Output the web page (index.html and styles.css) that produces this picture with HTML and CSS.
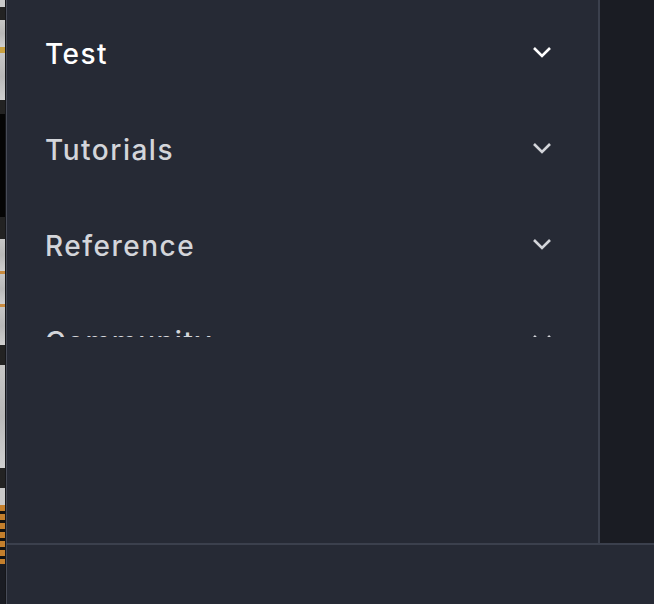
FILE: index.html
```html
<!DOCTYPE html>
<html>
<head>
<meta charset="utf-8">
<link rel="stylesheet" href="styles.css">
</head>
<body>
<div class="app">
  <div class="thumbs">
    <div class="t light" style="height:7px"></div>
    <div class="t dark" style="height:13px"></div>
    <div class="t light text" style="height:27px"></div>
    <div class="t light dot" style="height:6px"></div>
    <div class="t light text" style="height:47px"></div>
    <div class="t dark" style="height:14px"></div>
    <div class="t black" style="height:103px"></div>
    <div class="t dark" style="height:22px"></div>
    <div class="t light text" style="height:32px"></div>
    <div class="t light orange" style="height:3px"></div>
    <div class="t light text" style="height:30px"></div>
    <div class="t light orange" style="height:3px"></div>
    <div class="t light text" style="height:38px"></div>
    <div class="t dark" style="height:20px"></div>
    <div class="t light text" style="height:103px"></div>
    <div class="t dark" style="height:20px"></div>
    <div class="t light" style="height:17px"></div>
    <div class="t orange-fill" style="height:59px"></div>
  </div>
  <div class="main">
    <div class="top">
      <nav class="sidebar">
        <div class="list">
          <div class="row active"><span class="label">Test</span>
            <svg class="chev" width="20" height="12" viewBox="0 0 20 12"><path d="M2 2L10 10L18 2" fill="none" stroke="currentColor" stroke-width="2.6"/></svg>
          </div>
          <div class="row"><span class="label">Tutorials</span>
            <svg class="chev" width="20" height="12" viewBox="0 0 20 12"><path d="M2 2L10 10L18 2" fill="none" stroke="currentColor" stroke-width="2.6"/></svg>
          </div>
          <div class="row"><span class="label">Reference</span>
            <svg class="chev" width="20" height="12" viewBox="0 0 20 12"><path d="M2 2L10 10L18 2" fill="none" stroke="currentColor" stroke-width="2.6"/></svg>
          </div>
          <div class="row"><span class="label">Community</span>
            <svg class="chev" width="20" height="12" viewBox="0 0 20 12"><path d="M2 2L10 10L18 2" fill="none" stroke="currentColor" stroke-width="2.6"/></svg>
          </div>
        </div>
      </nav>
      <div class="rest"></div>
    </div>
    <div class="bottom"></div>
  </div>
</div>
</body>
</html>
```

FILE: styles.css
```css
html, body {
  margin: 0;
  padding: 0;
  width: 654px;
  height: 604px;
  overflow: hidden;
  background: #1a1c23;
  font-family: Inter, "Noto Sans", sans-serif;
}
.app {
  display: flex;
  height: 604px;
}
.thumbs {
  width: 5px;
  display: flex;
  flex-direction: column;
  border-right: 1px solid #15161a;
}
.t { flex: none; }
.light { background: #c9c9c9; }
.text { background: linear-gradient(180deg, #c6c6c6, #b9b9b9 50%, #cfcfcf); }
.dot { background: #c8a040; }
.dark { background: #232323; }
.black { background: #050505; }
.orange { background: #c98b3f; }
.orange-fill {
  background: repeating-linear-gradient(180deg, #c47f2c 0 6px, #141210 6px 9px);
}
.main {
  flex: 1;
  display: flex;
  flex-direction: column;
  border-left: 1px solid #474b57;
}
.top {
  display: flex;
  height: 543px;
}
.sidebar {
  flex: 1;
  background: #262a35;
  border-right: 2px solid #3b404d;
}
.list {
  height: 337px;
  overflow: hidden;
  padding: 5px 46px 0 38px;
  box-sizing: border-box;
}
.row {
  height: 96px;
  display: flex;
  align-items: center;
  justify-content: space-between;
  color: #d3d5da;
}
.row.active { color: #ffffff; }
.label {
  font-size: 28px;
  font-weight: 500;
  letter-spacing: 1.5px;
  line-height: 32px;
  margin-top: 2px;
}
.chev { display: block; margin-top: -3px; }
.rest {
  width: 54px;
  background: #1a1c23;
}
.bottom {
  flex: 1;
  background: #262a35;
  border-top: 2px solid #3b404d;
}
```
